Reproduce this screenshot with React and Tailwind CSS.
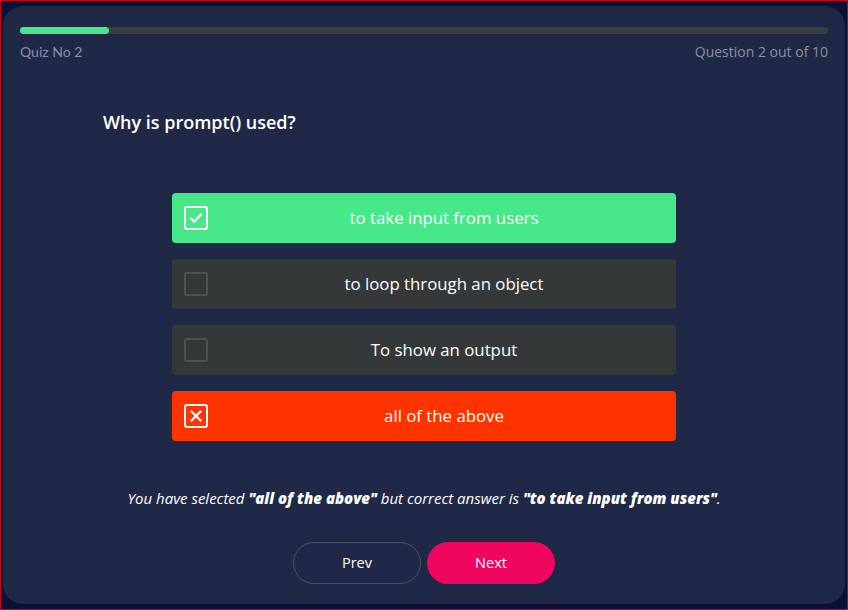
import React from 'react';

const OPTIONS = [
  { text: 'to take input from users', state: 'correct' },
  { text: 'to loop through an object', state: 'none' },
  { text: 'To show an output', state: 'none' },
  { text: 'all of the above', state: 'wrong' },
];

function Option({ text, state }) {
  const bg =
    state === 'correct' ? 'bg-[#46e88a]' : state === 'wrong' ? 'bg-[#ff3300]' : 'bg-[#343839]';
  return (
    <div className={`flex h-[50px] items-center gap-1 rounded pl-3 ${bg}`}>
      {/* checkbox */}
      <div
        className={`flex h-[24px] w-[24px] shrink-0 items-center justify-center rounded-[3px] border-2 ${
          state === 'none' ? 'border-[#4c5154]' : 'border-white'
        }`}
      >
        {state === 'correct' && (
          <svg width="14" height="14" viewBox="0 0 14 14" fill="none">
            <path d="M2 7.5l3.2 3.2L12 3.5" stroke="white" strokeWidth="2.4" strokeLinecap="round" strokeLinejoin="round" />
          </svg>
        )}
        {state === 'wrong' && (
          <svg width="12" height="12" viewBox="0 0 12 12" fill="none">
            <path d="M1.5 1.5l9 9M10.5 1.5l-9 9" stroke="white" strokeWidth="2.4" strokeLinecap="round" />
          </svg>
        )}
      </div>
      <span className="flex-1 text-center text-[16.8px] text-white">{text}</span>
    </div>
  );
}

export default function App() {
  return (
    <div
      className="h-screen w-full border border-[#c8001a] bg-[#0c1034] px-[2px] py-[5px]"
      style={{ fontFamily: '"Open Sans", "Noto Sans", sans-serif' }}
    >
      <div className="flex h-full flex-col rounded-[20px] bg-[#1f2846] px-[17px] pt-[21px]">
        {/* progress */}
        <div className="h-[7px] w-full rounded-full bg-[#393e40]">
          <div className="h-full w-[89px] rounded-full bg-[#46e88a]" />
        </div>
        <div className="mt-[7px] flex justify-between text-[14px] text-[#8b91a6]">
          <span style={{ fontFamily: 'Lato, sans-serif' }}>Quiz No 2</span>
          <span>Question 2 out of 10</span>
        </div>

        <h2 className="ml-[83px] mt-[47px] text-[18px] font-semibold text-white">Why is prompt() used?</h2>

        <div className="mx-auto mt-[57px] flex w-[504px] flex-col gap-4">
          {OPTIONS.map((o) => (
            <Option key={o.text} {...o} />
          ))}
        </div>

        <p className="mt-[46px] text-center text-[15px] italic text-white">
          You have selected <b className="font-extrabold">"all of the above"</b> but correct answer is{' '}
          <b className="font-extrabold">"to take input from users"</b>.
        </p>

        <div className="mt-[32px] flex justify-center gap-[6px]">
          <button className="h-[42px] w-[128px] rounded-full border border-[#4a5168] text-[14.5px] font-medium text-white">
            Prev
          </button>
          <button className="h-[42px] w-[128px] rounded-full bg-[#f0065f] text-[14.5px] font-medium text-white">
            Next
          </button>
        </div>
      </div>
    </div>
  );
}
